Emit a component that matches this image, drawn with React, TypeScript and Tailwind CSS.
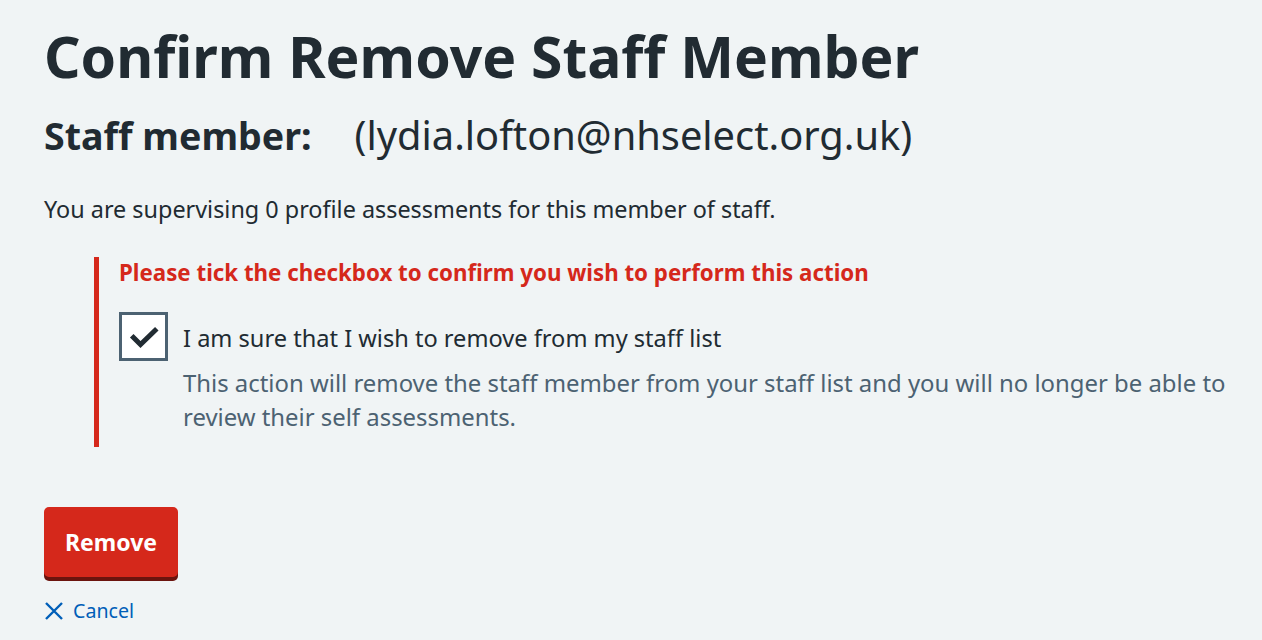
export default function App() {
  return (
    <div className="min-h-screen bg-[#f0f4f5] font-['Noto_Sans',sans-serif] text-[#212b32]">
      <main className="pl-[44px] pr-[24px] pt-[22px]">
        <h1 className="text-[57px] font-bold leading-[1.2]">Confirm Remove Staff Member</h1>
        <h2 className="mt-[21px] flex items-baseline leading-[1.2]">
          <span className="text-[37.6px] font-bold">Staff member:</span>
          <span className="ml-[43px] text-[39.8px] font-normal">(lydia.lofton@nhselect.org.uk)</span>
        </h2>
        <p className="mt-[33px] text-[23.4px] leading-[1.5]">
          You are supervising 0 profile assessments for this member of staff.
        </p>

        <div className="mt-[30px] ml-[50px] border-l-[5px] border-[#d5281b] pb-[13px] pl-[20px] pt-[1px]">
          <p className="text-[22.3px] font-bold leading-[30px] text-[#d5281b]">
            Please tick the checkbox to confirm you wish to perform this action
          </p>
          <label className="mt-[24px] flex items-start gap-[15px]">
            <span className="flex h-[49px] w-[49px] shrink-0 items-center justify-center border-[3px] border-[#4c6272] bg-white">
              <svg width="30" height="30" viewBox="0 0 30 30" fill="none">
                <path d="M4.5 15.5l7 7L26 8.5" stroke="#212b32" strokeWidth="5" strokeLinecap="square" />
              </svg>
            </span>
            <span className="flex flex-col pt-[9px]">
              <span className="text-[23.6px] leading-[35px]">I am sure that I wish to remove from my staff list</span>
              <span className="mt-[10px] text-[23.9px] leading-[34px] text-[#4c6272]">
                This action will remove the staff member from your staff list and you will no longer be able to review their self assessments.
              </span>
            </span>
          </label>
        </div>

        <button className="mt-[60px] h-[70px] rounded-[5px] bg-[#d5281b] px-[21px] text-[23px] font-bold text-white shadow-[0_4px_0_#6b140e]">
          Remove
        </button>

        <a href="#" className="mt-[19px] flex w-fit items-center gap-[9px] text-[19.6px] leading-[29px] text-[#005eb8]">
          <svg width="20" height="20" viewBox="0 0 20 20" fill="none">
            <path d="M2 2l16 16M18 2L2 18" stroke="#005eb8" strokeWidth="2.4" />
          </svg>
          Cancel
        </a>
      </main>
    </div>
  );
}
